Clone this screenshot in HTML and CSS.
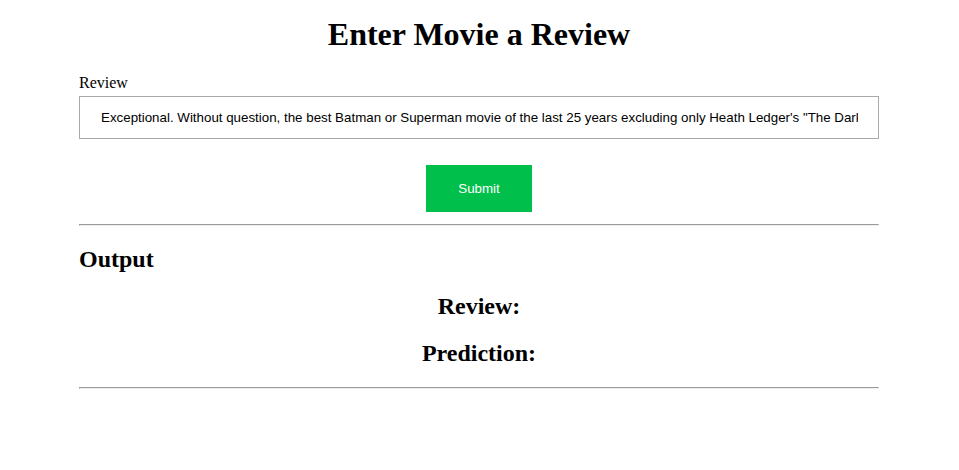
FILE: index.html
```html
<!DOCTYPE html>
<html>
<head>
<meta charset="utf-8">
<link rel="stylesheet" href="styles.css">
</head>
<body>
<div class="page">
  <h1 class="title">Enter Movie a Review</h1>
  <form class="form">
    <label class="label" for="review">Review</label>
    <input class="input" id="review" type="text" value="Exceptional. Without question, the best Batman or Superman movie of the last 25 years excluding only Heath Ledger's &quot;The Dark Knight&quot;.">
    <div class="actions"><button class="submit" type="button">Submit</button></div>
  </form>
  <hr class="rule">
  <h2 class="output-title">Output</h2>
  <h2 class="result">Review:</h2>
  <h2 class="result">Prediction:</h2>
  <hr class="rule">
</div>
</body>
</html>
```
FILE: styles.css
```css
html, body {
  margin: 0;
  padding: 0;
  background: #fff;
}
body {
  font-family: "Liberation Serif", serif;
  color: #000;
}
.page {
  padding: 16px 80px 0 79px;
  display: flex;
  flex-direction: column;
}
.title {
  margin: 0;
  font-size: 32px;
  font-weight: bold;
  text-align: center;
  line-height: 37px;
}
.form {
  display: flex;
  flex-direction: column;
  margin-top: 21px;
}
.label {
  font-size: 16px;
  line-height: 18px;
}
.input {
  box-sizing: border-box;
  margin-top: 4px;
  width: 100%;
  height: 43px;
  border: 1px solid #a9a9a9;
  padding: 0 20px 0 21px;
  font-family: "Liberation Sans", sans-serif;
  font-size: 13.33px;
  color: #000;
  outline: none;
}
.actions {
  display: flex;
  justify-content: center;
  margin-top: 26px;
}
.submit {
  width: 106px;
  height: 47px;
  border: none;
  background: #00c04b;
  color: #fff;
  font-family: "Liberation Sans", sans-serif;
  font-size: 13.33px;
  padding: 0;
}
.rule {
  margin: 12px 0 0;
  height: 0;
  width: 100%;
  box-sizing: border-box;
  border-style: solid;
  border-width: 1px;
  border-color: #9a9a9a #eeeeee #eeeeee #9a9a9a;
}
.output-title {
  margin: 20px 0 0;
  font-size: 24px;
  line-height: 27px;
}
.result {
  margin: 20px 0 0;
  font-size: 24px;
  line-height: 27px;
  text-align: center;
}
.result + .rule {
  margin-top: 20px;
}
```
